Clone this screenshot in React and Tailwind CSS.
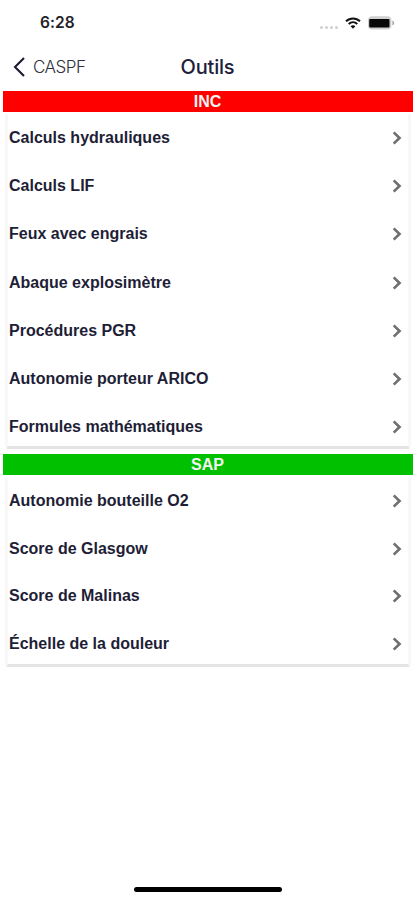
import clsx from 'clsx';

const incTools = [
  'Calculs hydrauliques',
  'Calculs LIF',
  'Feux avec engrais',
  'Abaque explosimètre',
  'Procédures PGR',
  'Autonomie porteur ARICO',
  'Formules mathématiques',
];

const sapTools = [
  'Autonomie bouteille O2',
  'Score de Glasgow',
  'Score de Malinas',
  'Échelle de la douleur',
];

const StatusBar = () => (
  <div className="h-[46px] pl-[40px] pr-[20px] flex items-center justify-between">
    <span className="text-[15.5px] leading-none font-semibold tracking-[0.1px] text-[#222226] font-['Inter',sans-serif]">
      6:28
    </span>
    <div className="flex items-center">
      {/* No signal */}
      <div className="flex gap-[2px] mt-[8px] mr-[7px]">
        <span className="size-[3px] rounded-full bg-[#cfcfcf]" />
        <span className="size-[3px] rounded-full bg-[#cfcfcf]" />
        <span className="size-[3px] rounded-full bg-[#cfcfcf]" />
        <span className="size-[3px] rounded-full bg-[#cfcfcf]" />
      </div>
      <svg width="16" height="12" viewBox="0 0 16 12" fill="none" stroke="#111" className="mr-[7px]">
        <path d="M1 4.3C5 .4 11 .4 15 4.3" strokeWidth="2" />
        <path d="M3.7 7C6.2 4.6 9.8 4.6 12.3 7" strokeWidth="1.9" />
        <path d="M8 11.8 5.6 9.3C7 8 9 8 10.4 9.3Z" fill="#111" stroke="none" />
      </svg>
      <svg width="27" height="14" viewBox="0 0 27 14">
        <rect x="0" y=".3" width="23.4" height="13.2" rx="4" fill="#d0d0d0" />
        <rect x="1.2" y="3" width="20.3" height="8.4" rx="1" fill="#080808" />
        <path d="M24.4 4.5c2.4.8 2.4 4.2 0 5Z" fill="#a8a8a8" />
      </svg>
    </div>
  </div>
);

const Header = () => (
  <div className="h-[45px] grid grid-cols-[1fr_auto_1fr] items-center font-['Inter',sans-serif] text-[#20203a]">
    <button className="flex items-center pl-[13px] pb-[3px]">
      <svg width="12" height="20" viewBox="0 0 12 20" fill="none" stroke="#1b1b35" strokeWidth="2.1">
        <path d="M11 1 2 10l9 9" />
      </svg>
      <span className="ml-[8px] text-[17px] leading-none font-light tracking-[-0.5px] text-[#30303c]">CASPF</span>
    </button>
    <h1 className="text-[20px] leading-none font-medium tracking-[-0.2px] pb-[3px]">Outils</h1>
    <span />
  </div>
);

const SectionTitle = ({ color, children }) => (
  <h2
    className={clsx(
      "mx-[2.5px] h-[21px] flex items-center justify-center text-[16px] leading-none font-bold text-[#f3f3f3]",
      color
    )}
  >
    {children}
  </h2>
);

const ToolList = ({ tools, className, rowClass }) => (
  <ul
    className={clsx(
      "ml-[5px] mr-[4px] overflow-hidden rounded-b-[4px] border-x-[3px] border-b-[3px] border-x-[#f8f8f8] border-b-[#e4e4e4]",
      className
    )}
  >
    {tools.map((tool) => (
      <li key={tool} className={clsx("flex items-center justify-between pl-px pr-[6px]", rowClass)}>
        <span className="text-[16px] leading-none font-bold text-[#1e1e36]">{tool}</span>
        <svg width="10" height="14" viewBox="0 0 10 14" fill="none" stroke="#707070" strokeWidth="2.7">
          <path d="M1.7 1.4 7.5 7l-5.8 5.6" />
        </svg>
      </li>
    ))}
  </ul>
);

const App = () => {
  return (
    <div className="h-[900px] w-[415px] flex flex-col bg-white overflow-hidden font-['Liberation_Sans',Arial,sans-serif]">
      <StatusBar />
      <Header />
      <SectionTitle color="bg-[#ff0000]">INC</SectionTitle>
      <ToolList tools={incTools} className="mt-[2px] h-[335px]" rowClass="h-[48.2px]" />
      <div className="h-[5px]" />
      <SectionTitle color="bg-[#00c000]">SAP</SectionTitle>
      <ToolList tools={sapTools} className="mt-[2px] h-[190px]" rowClass="h-[47.8px]" />

      {/* Home indicator */}
      <div className="mt-auto mb-[8px] mx-auto h-[5px] w-[148px] rounded-full bg-black" />
    </div>
  );
};

export default App;
